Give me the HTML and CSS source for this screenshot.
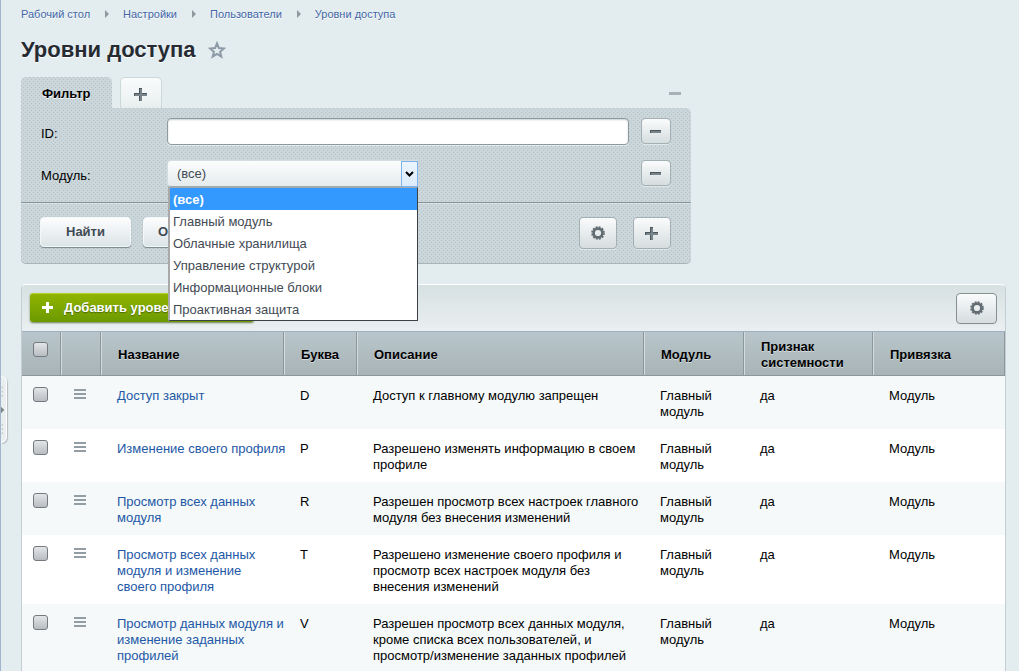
FILE: index.html
```html
<!DOCTYPE html>
<html lang="ru">
  <head>
    <meta charset="utf-8">
    <title>Уровни доступа</title>
    <link rel="stylesheet" href="styles.css">
  </head>

  <body>
    <svg width="0" height="0" class="sprite">
      <symbol id="gear" viewBox="0 0 14 14">
        <circle cx="7" cy="7" r="4.4" fill="none" stroke="#626d73" stroke-width="2.6"/>
        <circle cx="7" cy="7" r="6" fill="none" stroke="#626d73" stroke-width="1.6" stroke-dasharray="2 1.14"/>
      </symbol>
      <symbol id="plus" viewBox="0 0 13 13">
        <path d="M5 0h3v5h5v3H8v5H5V8H0V5h5z" fill="#4c575d"/>
        <path d="M6 1h2v12H6zM1 6h12v2H1z" fill="#788489"/>
      </symbol>
      <symbol id="minus" viewBox="0 0 11 3">
        <path d="M0 0h11v3H0z" fill="#4c575d"/>
        <path d="M1 1h10v2H1z" fill="#788489"/>
      </symbol>
    </svg>

    <button class="menu-handle" type="button" aria-label="Меню">
      <svg width="6" height="66" viewBox="0 0 6 66">
        <path d="M1.5 5v12M1.5 50v12" stroke="#a9b2b6" stroke-dasharray="2 3"/>
        <path d="M0 29l4 4-4 4z" fill="#7d868a"/>
      </svg>
    </button>

    <div class="workarea">
      <nav class="breadcrumbs">
        <a href="#">Рабочий стол</a>
        <a href="#">Настройки</a>
        <a href="#">Пользователи</a>
        <a href="#">Уровни доступа</a>
      </nav>

      <div class="title">
        <h1>Уровни доступа</h1>
        <button class="favorite" type="button" aria-label="В избранное">
          <svg width="18" height="18" viewBox="0 0 18 18">
            <path d="M9 2.4l1.9 4.7 5.1.4-3.9 3.3 1.2 4.9L9 13l-4.3 2.7 1.2-4.9L2 7.500l5.100-.4z" fill="none" stroke="#8c99a6" stroke-width="2"/>
          </svg>
        </button>
      </div>

      <form class="filter">
        <div class="filter-tabs">
          <button class="tab tab-active" type="button">Фильтр</button>
          <button class="tab tab-add" type="button" aria-label="Добавить фильтр"><svg width="13" height="13"><use href="#plus"/></svg></button>
          <button class="filter-hide" type="button" aria-label="Свернуть"></button>
        </div>

        <div class="filter-body">
          <div class="filter-row">
            <label for="filter_id">ID:</label>
            <input type="text" id="filter_id" class="filter-input">
            <button class="btn btn-small" type="button" aria-label="Скрыть ID"><svg width="11" height="3"><use href="#minus"/></svg></button>
          </div>
          <div class="filter-row">
            <label for="filter_module">Модуль:</label>
            <div class="select-wrap">
              <select id="filter_module" class="filter-select">
                <option>(все)</option>
                <option>Главный модуль</option>
                <option>Облачные хранилища</option>
                <option>Управление структурой</option>
                <option>Информационные блоки</option>
                <option>Проактивная защита</option>
              </select>
              <span class="select-arrow">
                <svg width="9" height="6" viewBox="0 0 9 6"><path d="M1 1l3.5 3.5L8 1" fill="none" stroke="#000" stroke-width="2"/></svg>
              </span>
              <ul class="select-list" role="listbox">
                <li class="selected" role="option">(все)</li>
                <li role="option">Главный модуль</li>
                <li role="option">Облачные хранилища</li>
                <li role="option">Управление структурой</li>
                <li role="option">Информационные блоки</li>
                <li role="option">Проактивная защита</li>
              </ul>
            </div>
            <button class="btn btn-small" type="button" aria-label="Скрыть модуль"><svg width="11" height="3"><use href="#minus"/></svg></button>
          </div>

          <div class="filter-bottom">
            <button class="btn btn-text" type="button">Найти</button>
            <button class="btn btn-text" type="button">Отменить</button>
            <button class="btn btn-icon push" type="button" aria-label="Настройки фильтра"><svg width="14" height="14"><use href="#gear"/></svg></button>
            <button class="btn btn-icon" type="button" aria-label="Добавить условие"><svg width="13" height="13"><use href="#plus"/></svg></button>
          </div>
        </div>
      </form>

      <div class="list">
        <div class="list-top">
          <button class="btn-add" type="button">
            <svg width="11" height="11" viewBox="0 0 11 11"><path d="M4 0h3v4h4v3H7v4H4V7H0V4h4z" fill="#fff"/></svg>
            Добавить уровень доступа
          </button>
          <button class="btn btn-settings" type="button" aria-label="Настройки списка"><svg width="14" height="14"><use href="#gear"/></svg></button>
        </div>

        <table class="list-table">
          <colgroup>
            <col class="col-check">
            <col class="col-menu">
            <col class="col-name">
            <col class="col-letter">
            <col class="col-descr">
            <col class="col-module">
            <col class="col-sys">
            <col>
          </colgroup>
          <thead>
            <tr>
              <th class="check"><input type="checkbox" aria-label="Выбрать все"></th>
              <th></th>
              <th>Название</th>
              <th>Буква</th>
              <th>Описание</th>
              <th>Модуль</th>
              <th>Признак системности</th>
              <th>Привязка</th>
            </tr>
          </thead>
          <tbody>
            <tr>
              <td class="check"><input type="checkbox" aria-label="D"></td>
              <td class="menu"><button class="row-menu" type="button" aria-label="Действия"></button></td>
              <td><a href="#">Доступ закрыт</a></td>
              <td>D</td>
              <td>Доступ к главному модулю запрещен</td>
              <td>Главный модуль</td>
              <td>да</td>
              <td>Модуль</td>
            </tr>
            <tr>
              <td class="check"><input type="checkbox" aria-label="P"></td>
              <td class="menu"><button class="row-menu" type="button" aria-label="Действия"></button></td>
              <td class="nowrap"><a href="#">Изменение своего профиля</a></td>
              <td>P</td>
              <td>Разрешено изменять информацию в своем профиле</td>
              <td>Главный модуль</td>
              <td>да</td>
              <td>Модуль</td>
            </tr>
            <tr>
              <td class="check"><input type="checkbox" aria-label="R"></td>
              <td class="menu"><button class="row-menu" type="button" aria-label="Действия"></button></td>
              <td><a href="#">Просмотр всех данных модуля</a></td>
              <td>R</td>
              <td>Разрешен просмотр всех настроек главного модуля без внесения изменений</td>
              <td>Главный модуль</td>
              <td>да</td>
              <td>Модуль</td>
            </tr>
            <tr>
              <td class="check"><input type="checkbox" aria-label="T"></td>
              <td class="menu"><button class="row-menu" type="button" aria-label="Действия"></button></td>
              <td><a href="#">Просмотр всех данных модуля и изменение своего профиля</a></td>
              <td>T</td>
              <td>Разрешено изменение своего профиля и просмотр всех настроек модуля без внесения изменений</td>
              <td>Главный модуль</td>
              <td>да</td>
              <td>Модуль</td>
            </tr>
            <tr>
              <td class="check"><input type="checkbox" aria-label="V"></td>
              <td class="menu"><button class="row-menu" type="button" aria-label="Действия"></button></td>
              <td><a href="#">Просмотр данных модуля и изменение заданных профилей</a></td>
              <td>V</td>
              <td>Разрешен просмотр всех данных модуля, кроме списка всех пользователей, и просмотр/изменение заданных профилей</td>
              <td>Главный модуль</td>
              <td>да</td>
              <td>Модуль</td>
            </tr>
          </tbody>
        </table>
      </div>
    </div>
  </body>
</html>
```

FILE: styles.css
```css
* {
  box-sizing: border-box;
}

body {
  position: relative;
  height: 100vh;
  margin: 0;
  overflow: hidden;
  font: 13px/16px "Liberation Sans", Arial, sans-serif;
  color: #000;
  background-color: #e3ecee;
  border-left: 1px solid #a3b5cc;
}

button,
input,
select {
  margin: 0;
  font-family: inherit;
  font-size: 13px;
}

button {
  display: flex;
  align-items: center;
  justify-content: center;
  padding: 0;
  border: 0;
  background: none;
}

a {
  color: #2358a6;
  text-decoration: none;
}

.sprite {
  position: absolute;
}

/* left menu handle */
.menu-handle {
  position: absolute;
  top: 376px;
  left: 0;
  width: 6px;
  height: 67px;
  background: #e9eff0;
  border: 1px solid #fff;
  border-left: 0;
  border-radius: 0 6px 6px 0;
  box-shadow: 1px 1px 1px #b3bcc0;
}

.workarea {
  padding: 6px 13px 0 20px;
}

/* breadcrumbs */
.breadcrumbs {
  display: flex;
  font-size: 11px;
}

.breadcrumbs a {
  display: flex;
  align-items: center;
  color: #3f66a6;
  text-shadow: 0 1px 0 #fff;
}

.breadcrumbs a + a::before {
  content: "";
  margin: 0 14px 0 15px;
  border: 4px solid transparent;
  border-left-color: #8f999d;
  border-right: 0;
}

/* title */
.title {
  display: flex;
  align-items: center;
  gap: 12px;
  padding: 14px 0;
}

h1 {
  margin: 0;
  font-size: 22px;
  line-height: 27px;
  color: #262b33;
  text-shadow: 0 1px 0 #fff;
}

/* filter */
.filter {
  width: 68%;
}

.filter-tabs {
  display: flex;
  align-items: flex-end;
}

.tab {
  height: 31px;
  padding-top: 2px;
  border-radius: 5px 5px 0 0;
}

.tab-active,
.filter-body {
  background-color: #cbd6da;
  background-image:
    conic-gradient(from 270deg at 1px 1px, #b5c2c7 90deg, transparent 0),
    conic-gradient(from 270deg at 1px 1px, #b5c2c7 90deg, transparent 0);
  background-position: 0 0, 2px 2px;
  background-size: 4px 4px;
}

.tab-active {
  padding: 2px 21px 0;
  font-weight: bold;
  text-shadow: 0 1px 0 #fff;
}

.tab-add {
  width: 42px;
  margin-left: 8px;
  border: 1px solid #cdd8db;
  border-bottom: 0;
  background: linear-gradient(#fafcfc, #e8eeef);
}

.filter-hide {
  width: 12px;
  height: 3px;
  margin: 0 10px 13px auto;
  background: #a8b2b7;
}

.filter-body {
  padding-top: 10px;
  border-bottom: 1px solid #a9b5ba;
  border-radius: 0 5px 5px 5px;
}

.filter-row {
  display: flex;
  align-items: flex-start;
  height: 42px;
  padding: 0 20px;
}

.filter-row label {
  width: 126px;
  padding-top: 8px;
}

.filter-row .btn {
  margin-left: auto;
}

.filter-input {
  flex: 1;
  height: 27px;
  margin-right: 12px;
  padding: 0 8px;
  border: 1px solid #8c999f;
  border-radius: 4px;
  background: #fff;
  box-shadow: inset 0 1px 2px #c8cfd3, 0 1px 0 #e3eaec;
}

.select-wrap {
  position: relative;
  width: 251px;
}

.filter-select {
  display: block;
  width: 100%;
  height: 27px;
  padding: 0 9px;
  border: 1px solid #d4dcdf;
  border-bottom-color: #a2acb0;
  border-radius: 4px 0 0 4px;
  color: #434a54;
  background: linear-gradient(#fcfdfd, #e5ebed);
  appearance: none;
}

.select-arrow {
  position: absolute;
  top: 1px;
  right: 0;
  display: flex;
  align-items: center;
  justify-content: center;
  width: 17px;
  height: 26px;
  border: 1px solid #7eb4ea;
  background: linear-gradient(#ebf4fc, #dcecfc);
  pointer-events: none;
}

.select-list {
  position: absolute;
  top: 27px;
  left: 1px;
  right: 0;
  z-index: 1;
  margin: 0;
  padding: 0;
  list-style: none;
  color: #434a54;
  background: #fff;
  border: 1px solid #3c3f45;
  border-top-color: #a0a8ac;
  border-left: 2px solid #a9a9a9;
}

.select-list li {
  padding: 4px 3px 2px;
  line-height: 16px;
}

.select-list .selected {
  color: #fff;
  font-weight: bold;
  background: #3399ff;
}

.filter-bottom {
  display: flex;
  align-items: center;
  gap: 12px;
  padding: 14px 20px 14px 19px;
  border-top: 1px solid #84929a;
  box-shadow: inset 0 1px 0 #dbe4e7;
}

.push {
  margin-left: auto;
}

.btn {
  border: 1px solid #a4afb3;
  border-radius: 4px;
  background: linear-gradient(#fafbfc, #d5dddf);
  box-shadow: 0 1px 0 #dfe7e9;
}

.btn-small {
  width: 30px;
  height: 26px;
}

.btn-text {
  height: 30px;
  margin-bottom: 2px;
  padding: 0 25px 2px;
  border-color: #f4f7f8;
  color: #3f4b54;
  font-weight: bold;
  background: linear-gradient(#fdfdfe, #dce4e7);
  box-shadow: 0 1px 1px #77858c;
}

.btn-text + .btn-text {
  padding: 0 14px 2px;
}

.btn-icon {
  width: 38px;
  height: 32px;
}

.btn-icon + .btn-icon {
  margin-left: 4px;
}

/* list */
.list {
  margin-top: 20px;
  border: 1px solid #c3ced2;
  border-top-color: #fff;
  border-radius: 5px 5px 0 0;
}

.list-top {
  display: flex;
  align-items: center;
  justify-content: space-between;
  height: 46px;
  padding: 0 8px;
  border-radius: 5px 5px 0 0;
  background: linear-gradient(#d7e1e2, #eaeff1);
}

.btn-add {
  gap: 11px;
  height: 29px;
  margin-bottom: 2px;
  padding: 0 14px 0 12px;
  border-top: 1px solid #b4d232;
  border-radius: 3px;
  color: #fff;
  font-weight: bold;
  text-shadow: 0 1px 1px #4e6b00;
  background: linear-gradient(#8fb500, #6c9900);
  box-shadow: 0 1px 2px #6c7d50;
}

.btn-settings {
  width: 41px;
  height: 31px;
  border-color: #84918f;
}

.list-table {
  width: 100%;
  table-layout: fixed;
  border-collapse: separate;
  border-spacing: 0;
  border-top: 1px solid #9fb0c4;
}

.col-check {
  width: 39px;
}

.col-menu {
  width: 40px;
}

.col-name {
  width: 183px;
}

.col-letter {
  width: 73px;
}

.col-descr {
  width: 287px;
}

.col-module {
  width: 100px;
}

.col-sys {
  width: 129px;
}

.list-table th {
  height: 44px;
  padding: 2px 16px 0 17px;
  text-align: left;
  text-shadow: 0 1px 0 #d5dddf;
  background: linear-gradient(#b8c5cb, #a8b4b5);
  border-right: 1px solid #8a979b;
  border-bottom: 1px solid #8a979b;
  box-shadow: inset 1px 0 0 #d3dbde;
}

.list-table td {
  padding: 12px 0 9px 16px;
  vertical-align: top;
  background: #fff;
}

.list-table tbody tr:nth-child(odd) td {
  background: #f5f9f9;
}

.list-table .nowrap {
  white-space: nowrap;
}

.list-table .check {
  padding: 11px 0 0 11px;
}

.list-table th.check {
  padding: 0 0 8px 11px;
  box-shadow: none;
}

.list-table .menu {
  padding: 13px 0 0 13px;
}

input[type="checkbox"] {
  display: block;
  width: 15px;
  height: 15px;
  appearance: none;
  border: 1px solid #747a7f;
  border-radius: 3px;
  background: linear-gradient(#e3e5e7, #b9bdc1);
}

.row-menu {
  width: 12px;
  height: 10px;
  background: repeating-linear-gradient(#929da4 0 2px, transparent 2px 4px);
}
```
